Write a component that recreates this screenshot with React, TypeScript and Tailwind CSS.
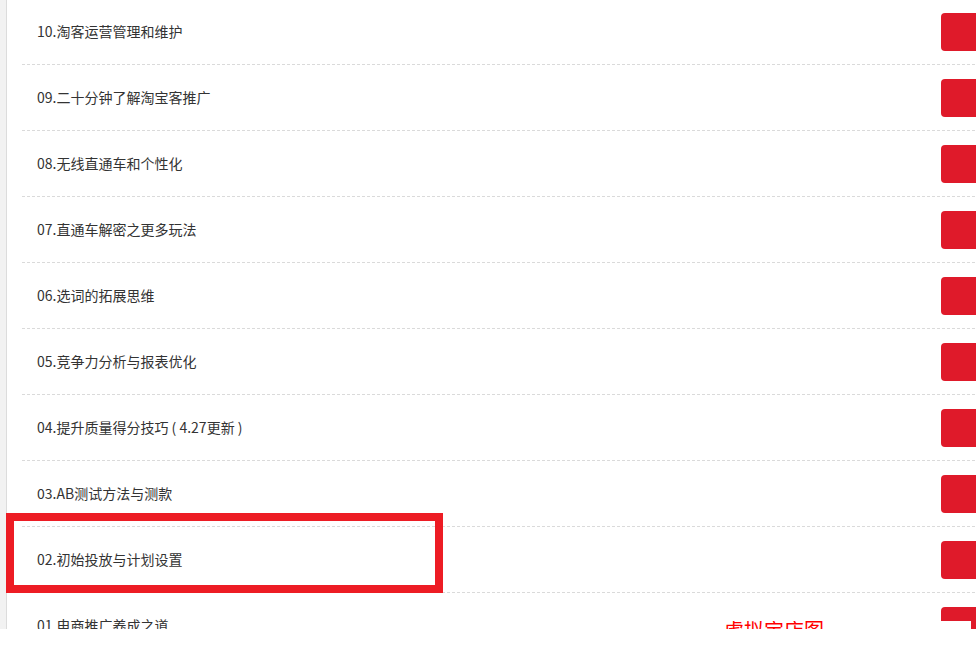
import React from 'react'

// Lista de lecciones, de la más nueva a la más vieja
const lessons = [
  '10.淘客运营管理和维护',
  '09.二十分钟了解淘宝客推广',
  '08.无线直通车和个性化',
  '07.直通车解密之更多玩法',
  '06.选词的拓展思维',
  '05.竞争力分析与报表优化',
  '04.提升质量得分技巧 ( 4.27更新 )',
  '03.AB测试方法与测款',
  '02.初始投放与计划设置',
  '01.电商推广养成之道',
]

export default function App() {
  return (
    <div
      className="relative w-[976px] h-[652px] overflow-hidden bg-white"
      style={{ fontFamily: '"Noto Sans CJK SC", "Noto Sans", sans-serif' }}
    >
      <div className="flex h-[629px] overflow-hidden">
        {/* franja gris a la izquierda */}
        <div className="w-[7px] shrink-0 bg-[#f2f2f2] border-r border-[#dcdcdc]" />

        <ul className="ml-[15px] -mt-px w-[978px] shrink-0">
          {lessons.map((t) => (
            <li
              key={t}
              className="flex h-[66px] items-center justify-between border-b border-dashed border-[#dadada] pl-[15px]"
            >
              <span className="text-[14px] text-[#333]">{t}</span>
              <span className="h-[38px] w-[59px] rounded-[4px] bg-[#df1a2a]" />
            </li>
          ))}
        </ul>
      </div>

      {/* recuadro rojo resaltando la lección 02 */}
      <div className="absolute left-[6px] top-[513px] h-[80px] w-[437px] border-[8px] border-[#ed1c24]" />

      {/* texto rojo recortado abajo */}
      <div className="absolute left-[690px] top-[621px] h-[8px] w-[281px] overflow-hidden bg-white">
        <p className="-mt-[1px] pl-[34px] text-[20px] leading-[20px] text-[#f00]">虚拟宝店图</p>
      </div>
    </div>
  )
}
